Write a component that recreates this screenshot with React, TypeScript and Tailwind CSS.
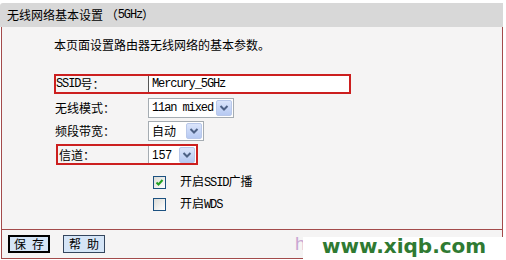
import type { ReactNode } from 'react';

// 半角英文字 (宋体 style): fixed 6px advance
const M = ({ children }: { children: ReactNode }) => (
  <span className="font-['Liberation_Mono',monospace] text-[12px] tracking-[-1.1px]">{children}</span>
);

const Arrow = () => (
  <div className="w-[16px] h-[16px] mr-[1px] bg-gradient-to-b from-[#dbe5fb] to-[#b6c9f2] border border-[#b9c8ea] rounded-[2px] flex items-center justify-center">
    <svg width="10" height="8" viewBox="0 0 10 8">
      <path d="M1.5 2 L5 5.5 L8.5 2" fill="none" stroke="#4d6185" strokeWidth="2" />
    </svg>
  </div>
);

const CheckBox = ({ checked }: { checked?: boolean }) => (
  <div className="w-[13px] h-[13px] border border-[#1c5180] bg-gradient-to-br from-[#dcdcd7] to-white flex items-center justify-center">
    {checked && (
      <svg width="9" height="9" viewBox="0 0 9 9">
        <path d="M1.5 4.5 L3.5 6.5 L7.5 2" fill="none" stroke="#21a121" strokeWidth="2" />
      </svg>
    )}
  </div>
);

const App = () => {
  return (
    <div className="relative w-[506px] h-[260px] overflow-hidden bg-white text-black text-[12px] leading-[12px] font-['Noto_Sans_CJK_SC',sans-serif]">
      <div className="pt-[3px] w-[503px]">
        {/* 标题栏 */}
        <div className="h-[24px] bg-[#d8d8d8] rounded-tl-[3px] flex items-center pl-[7px]">
          无线网络基本设置 （<M>5GHz</M>）
        </div>

        <div className="ml-[1px] w-[502px] border-x border-[#a34a4a] bg-[#f5f4f4]">
          {/* 设置内容 */}
          <div className="h-[203px] border-b border-[#a34a4a] pl-[52px] flex flex-col">
            <div className="mt-[12px]">本页面设置路由器无线网络的基本参数。</div>

            {/* SSID */}
            <div className="mt-[23px] w-[297px] h-[20px] border-2 border-[#cc1f1f] flex">
              <div className="w-[92px] flex items-center">
                <M>SSID</M>号：
              </div>
              <div className="flex-1 bg-white border-l border-[#555] flex items-center pl-[3px]">
                <M>Mercury_5GHz</M>
              </div>
            </div>

            {/* 无线模式 */}
            <div className="mt-[2px] h-[23px] flex items-center">
              <div className="w-[94px] pl-[1px]">无线模式：</div>
              <div className="w-[86px] h-[20px] bg-white border border-[#a5acb2] flex items-center pl-[3px]">
                <M>11an mixed</M>
                <div className="ml-auto"><Arrow /></div>
              </div>
            </div>

            {/* 频段带宽 */}
            <div className="h-[23px] flex items-center">
              <div className="w-[94px] pl-[1px]">频段带宽：</div>
              <div className="w-[56px] h-[20px] bg-white border border-[#a5acb2] flex items-center pl-[3px]">
                自动
                <div className="ml-auto"><Arrow /></div>
              </div>
            </div>

            {/* 信道 */}
            <div className="mt-[2px] ml-[2px] w-[142px] h-[21px] border-2 border-[#cc1f1f] flex items-center">
              <div className="w-[90px] pl-[1px]">信道：</div>
              <div className="w-[48px] h-[17px] bg-white border-l border-[#a5acb2] flex items-center pl-[3px]">
                <span className="font-['Liberation_Sans',sans-serif] text-[12px]">157</span>
                <div className="ml-auto"><Arrow /></div>
              </div>
            </div>

            {/* 复选框 */}
            <div className="mt-[6px] h-[22px] flex items-center pl-[99px] gap-[14px]">
              <CheckBox checked />
              <span>开启<M>SSID</M>广播</span>
            </div>
            <div className="h-[22px] flex items-center pl-[99px] gap-[14px]">
              <CheckBox />
              <span>开启<M>WDS</M></span>
            </div>
          </div>

          {/* 按钮 */}
          <div className="h-[29px] border-b border-[#a34a4a] flex items-center pl-[6px] gap-[13px]">
            <div className="w-[42px] h-[18px] border-2 border-black bg-[#d5e5f7] flex items-center justify-center gap-[6px]">
              <span>保</span><span>存</span>
            </div>
            <div className="w-[42px] h-[18px] border border-[#34465e] bg-[#d5e5f7] flex items-center justify-center gap-[6px]">
              <span>帮</span><span>助</span>
            </div>
          </div>
        </div>
      </div>

      {/* 水印 */}
      <div className="absolute left-[295px] top-[234px] text-[19px] leading-[20px] text-[#c9a6d2] font-['Liberation_Sans',sans-serif]">h</div>
      <div className="absolute left-[303px] top-[237px] w-[200px] h-[23px] bg-white pl-[19px] text-[20px] leading-[18px] font-bold text-[#2f7a32] font-['DejaVu_Sans',sans-serif]">
        www.xiqb.com
      </div>
    </div>
  );
};

export default App;
